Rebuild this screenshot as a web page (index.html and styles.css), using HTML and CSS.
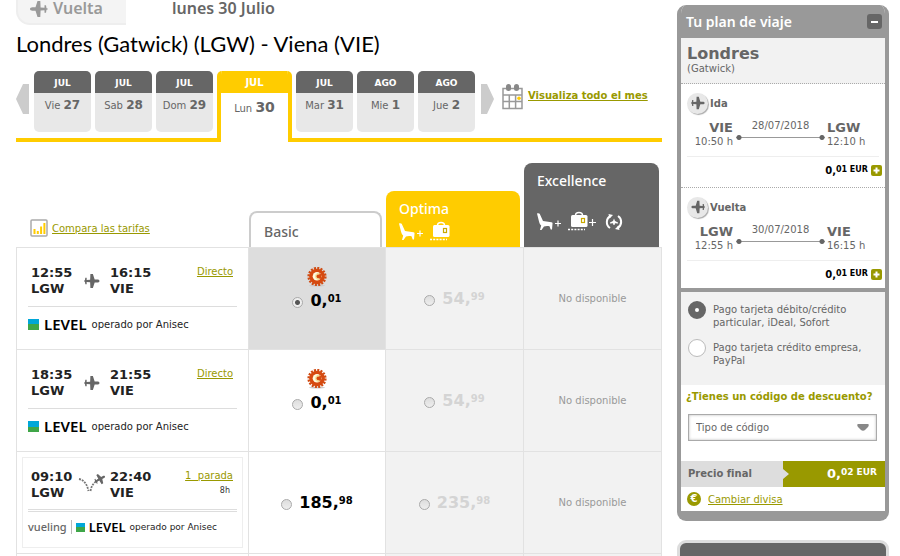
FILE: index.html
```html
<!DOCTYPE html>
<html lang="es">
<head>
<meta charset="utf-8">
<meta name="viewport" content="width=device-width, initial-scale=1">
<title>Londres - Viena</title>
<link rel="stylesheet" href="styles.css">
</head>
<body>
<svg class="defs" aria-hidden="true">
  <symbol id="plane" viewBox="0 0 18 18">
    <path d="M17.500 9c0 1-1 1.700-2.500 1.700h-3L10 17H7.200l-.3-6.500L3 10.200v2.500H1.500L1 9.700H0V8.300h1l.5-3H3v2.500l3.900-.3L7.200 1H10l2 6.300h3c1.500 0 2.500.7 2.500 1.700z"/>
  </symbol>
  <symbol id="seat" viewBox="0 0 26 18">
    <path d="M0 .5C.8 0 2 0 2.700.8L6 8l8.500 1.200c1 .2 1.200.8 1 1.600L15 16.500h-1.300l-1.200-3.300c-2-.5-4-.4-5.500.3L4.500 17H3l1.200-4.500C3 11.500 2.300 10 2 8.500z"/>
    <path d="M18 10.500h6M21 7.500v6" stroke="#fff" stroke-width="1.200" fill="none"/>
  </symbol>
  <symbol id="bag" viewBox="0 0 22 20">
    <path d="M8.500 4.500C8.500 .5 15.500 .5 15.500 4.500" fill="none" stroke="#fff" stroke-width="1.500"/>
    <rect x="4" y="4" width="16.500" height="12" rx="1.500"/>
    <rect x="14.500" y="7.500" width="3" height="4" fill="none" stroke="#c9a800" stroke-width="1.200"/>
    <path d="M1 18.500h17" stroke="#fff" stroke-width="1.500" stroke-dasharray="2 1.200"/>
  </symbol>
  <symbol id="promo" viewBox="0 0 20 20">
    <ellipse cx="10" cy="18.600" rx="8" ry="1" fill="#ccc"/>
    <circle cx="10" cy="9.500" r="8.300" fill="none" stroke="#cf4b12" stroke-width="2.600" stroke-dasharray="2 1.260"/>
    <circle cx="10" cy="9.500" r="7.800" fill="#d64a10"/>
    <circle cx="10" cy="9.300" r="4.300" fill="#fffbe0"/>
    <path d="M14 7.200a3 3 0 1 0 0 4.200z" fill="#d64a10"/>
    <path d="M12.500 7a2.600 2.600 0 1 0 0 4.600" fill="none" stroke="#f6e7a0" stroke-width="1.500"/>
  </symbol>
  <symbol id="plus" viewBox="0 0 11 11">
    <rect width="11" height="11" rx="2" fill="#999900"/>
    <path d="M5.500 2.500v6M2.500 5.500h6" stroke="#fff" stroke-width="2"/>
  </symbol>
</svg>

<div class="page">
<main class="main">
  <div class="leg">
    <div class="leg-tag"><svg class="leg-plane"><use href="#plane"/></svg>Vuelta</div>
    <div class="leg-date">lunes 30 Julio</div>
  </div>
  <h1>Londres (Gatwick) (LGW) - Viena (VIE)</h1>

  <div class="strip">
    <button class="arrow" aria-label="Anterior"><svg viewBox="0 0 13 30"><path d="M7 0h6v30H7L0 15z"/></svg></button>
    <button class="day"><span class="month">JUL</span><span class="date">Vie <b>27</b></span></button>
    <button class="day"><span class="month">JUL</span><span class="date">Sab <b>28</b></span></button>
    <button class="day"><span class="month">JUL</span><span class="date">Dom <b>29</b></span></button>
    <button class="day selected"><span class="month">JUL</span><span class="date">Lun <b>30</b></span></button>
    <button class="day"><span class="month">JUL</span><span class="date">Mar <b>31</b></span></button>
    <button class="day"><span class="month">AGO</span><span class="date">Mie <b>1</b></span></button>
    <button class="day"><span class="month">AGO</span><span class="date">Jue <b>2</b></span></button>
    <button class="arrow" aria-label="Siguiente"><svg viewBox="0 0 13 30"><path d="M6 0H0v30h6l7-15z"/></svg></button>
    <a class="month-link" href="#">
      <svg class="calendar" viewBox="0 0 21 26">
        <path d="M1 4.500h19v20H1zM1 11h19M1 17.500h19M7.300 11v13.500M13.600 11v13.500" fill="none" stroke="#999" stroke-width="1.500"/>
        <rect x="4" y="0" width="5" height="7" rx="2.500" fill="#888"/><rect x="12" y="0" width="5" height="7" rx="2.500" fill="#888"/>
        <circle cx="17" cy="14.300" r="1.800" fill="#fc0"/>
      </svg>
      <span>Visualiza todo el mes</span>
    </a>
  </div>

  <table class="fares">
    <thead>
      <tr>
        <th class="trip-col">
          <a class="compare" href="#">
            <svg viewBox="0 0 18 18"><rect x="1" y="1" width="16" height="16" rx="1" fill="#fff" stroke="#aaa" stroke-width="1.500"/><path d="M4.500 10v5M7.800 12v3M11.100 7.500V15M14.400 4v11" stroke="#fc0" stroke-width="2"/></svg>
            <span>Compara las tarifas</span>
          </a>
        </th>
        <th class="basic-col"><div class="tab basic">Basic</div></th>
        <th><div class="tab optima">Optima
          <div class="perks"><svg class="seat"><use href="#seat"/></svg><svg class="bag"><use href="#bag"/></svg></div></div></th>
        <th class="excellence-col"><div class="tab excellence">Excellence
          <div class="perks"><svg class="seat"><use href="#seat"/></svg><svg class="bag"><use href="#bag"/></svg><svg class="add" viewBox="0 0 7 7"><path d="M0 3.500h7M3.500 0v7" stroke="#fff" stroke-width="1.200"/></svg><svg class="flex" viewBox="0 0 18 18"><path d="M5.500 3A7 7 0 0 0 5 15M12.500 15A7 7 0 0 0 13 3" fill="none" stroke="#fff" stroke-width="2"/><path d="M3.500 1l4.500 1L4.500 5.500zM14.500 17l-4.500-1 3.500-3.500z"/><path d="M9 5.500l1 2.500 3 1.500v1l-3-.3-.5 1.800h-1L8 10.200l-3 .3v-1L8 8z"/></svg></div></div></th>
      </tr>
    </thead>
    <tbody>
      <tr>
        <td><div class="trip">
          <div class="times">
            <div class="stop">12:55<br>LGW</div><svg class="hop"><use href="#plane"/></svg><div class="stop">16:15<br>VIE</div>
            <div class="via"><a href="#">Directo</a></div>
          </div>
          <div class="carrier"><span class="flag"></span><span class="level">LEVEL</span><span>operado por Anisec</span></div>
        </div></td>
        <td class="chosen"><svg class="promo"><use href="#promo"/></svg><label class="price"><input type="radio" name="fare" checked><span>0,<sup>01</sup></span></label></td>
        <td class="off"><label class="price"><input type="radio" name="fare"><span>54,<sup>99</sup></span></label></td>
        <td class="off">No disponible</td>
      </tr>
      <tr>
        <td><div class="trip">
          <div class="times">
            <div class="stop">18:35<br>LGW</div><svg class="hop"><use href="#plane"/></svg><div class="stop">21:55<br>VIE</div>
            <div class="via"><a href="#">Directo</a></div>
          </div>
          <div class="carrier"><span class="flag"></span><span class="level">LEVEL</span><span>operado por Anisec</span></div>
        </div></td>
        <td><svg class="promo"><use href="#promo"/></svg><label class="price"><input type="radio" name="fare"><span>0,<sup>01</sup></span></label></td>
        <td class="off"><label class="price"><input type="radio" name="fare"><span>54,<sup>99</sup></span></label></td>
        <td class="off">No disponible</td>
      </tr>
      <tr>
        <td><div class="trip framed">
          <div class="times">
            <div class="stop">09:10<br>LGW</div>
            <svg class="hop bounce" viewBox="0 0 28 24"><path d="M1 6c5 1 8 5 9.500 12M12.500 18c1-6 4-9 8-11" fill="none" stroke="#777" stroke-width="1.800" stroke-dasharray="2 1"/><use href="#plane" x="16" y="0" width="12" height="12" transform="rotate(-30 22 6)"/></svg>
            <div class="stop">22:40<br>VIE</div>
            <div class="via"><a href="#">1&nbsp; parada</a><small>8h</small></div>
          </div>
          <div class="carrier"><span class="vueling">vueling</span><span class="flag"></span><span class="level">LEVEL</span><span>operado por Anisec</span></div>
        </div></td>
        <td><label class="price"><input type="radio" name="fare"><span>185,<sup>98</sup></span></label></td>
        <td class="off"><label class="price"><input type="radio" name="fare"><span>235,<sup>98</sup></span></label></td>
        <td class="off">No disponible</td>
      </tr>
      <tr class="rest"><td></td><td></td><td class="off"></td><td class="off"></td></tr>
    </tbody>
  </table>
</main>

<aside class="side">
  <section class="plan">
    <header><h2>Tu plan de viaje</h2><button class="fold" aria-label="Contraer"></button></header>
    <div class="city"><strong>Londres</strong><span>(Gatwick)</span></div>
    <div class="flight">
      <h3><span class="disc"><svg><use href="#plane"/></svg></span>Ida</h3>
      <div class="route">
        <div class="end from"><b>VIE</b>10:50 h</div>
        <div class="line">28/07/2018<i></i></div>
        <div class="end"><b>LGW</b>12:10 h</div>
      </div>
      <div class="cost"><span>0,<sup>01 EUR</sup></span><button aria-label="Ver detalle"><svg><use href="#plus"/></svg></button></div>
    </div>
    <div class="flight">
      <h3><span class="disc back"><svg><use href="#plane"/></svg></span>Vuelta</h3>
      <div class="route">
        <div class="end from"><b>LGW</b>12:55 h</div>
        <div class="line">30/07/2018<i></i></div>
        <div class="end"><b>VIE</b>16:15 h</div>
      </div>
      <div class="cost"><span>0,<sup>01 EUR</sup></span><button aria-label="Ver detalle"><svg><use href="#plus"/></svg></button></div>
    </div>
    <div class="payment">
      <label><input type="radio" name="pay" checked><span>Pago tarjeta débito/crédito particular, iDeal, Sofort</span></label>
      <label><input type="radio" name="pay"><span>Pago tarjeta crédito empresa, PayPal</span></label>
    </div>
    <div class="discount">
      <label for="code">¿Tienes un código de descuento?</label>
      <div class="select"><select id="code"><option>Tipo de código</option></select><svg viewBox="0 0 12 7"><path d="M1 0h10c1 0 1 2 0 3L8 6c-1 1-3 1-4 0L1 3C0 2 0 0 1 0z"/></svg></div>
    </div>
    <div class="total"><span class="total-label">Precio final</span><span class="total-price">0,<sup>02 EUR</sup></span></div>
    <div class="currency"><span class="euro">€</span><a href="#">Cambiar divisa</a></div>
  </section>
  <section class="next"></section>
</aside>
</div>
</body>
</html>
```
FILE: styles.css
```css
* { box-sizing: border-box; }
html, body { height: 100%; }
body {
  margin: 0;
  overflow: hidden;
  background: #fff;
  color: #666;
  font: 10px/13px "DejaVu Sans", Verdana, sans-serif;
}
button { margin: 0; padding: 0; border: 0; background: none; font: inherit; color: inherit; }
a { color: #999900; }
h1, h2, h3 { margin: 0; }
.defs { position: absolute; width: 0; height: 0; }
.page { display: flex; gap: 15px; height: 100%; overflow: hidden; padding: 0 11px 0 16px; }
.main { flex: 1; min-width: 0; }
.side { flex: 0 0 212px; padding-top: 5px; }

/* Leg heading */
.leg { display: flex; gap: 46px; height: 26px; font: 600 16px/16px "Noto Sans", sans-serif; }
.leg-tag {
  display: flex;
  gap: 5px;
  width: 110px;
  height: 25px;
  padding-left: 11px;
  border-bottom: 2px solid #eee;
  border-left: 2px solid #eee;
  border-bottom-left-radius: 14px;
  background: #f4f4f4;
  color: #999;
}
.leg-plane { width: 19px; height: 18px; fill: #999; transform: rotate(180deg); }
h1 { height: 45px; color: #000; font: 400 22px/36px Lato, sans-serif; }

/* Day strip */
.strip { display: flex; gap: 4px; height: 71px; border-bottom: 4px solid #fc0; }
.arrow { width: 13px; height: 30px; margin: 13px 1px 0 0; }
.arrow svg { display: block; width: 13px; height: 30px; fill: #ccc; }
.strip .day + .arrow { margin: 13px 0 0 2px; }
.day {
  display: flex;
  flex-direction: column;
  width: 57px;
  height: 61px;
  overflow: hidden;
  border-radius: 5px;
  background: #e8e8e8;
}
.month { align-self: stretch; height: 22px; background: #666; color: #fff; font-size: 9px; font-weight: bold; line-height: 24px; }
.date { align-self: stretch; line-height: 24px; }
.date b { font-size: 12px; }
.day.selected {
  width: 75px;
  height: 71px;
  border: solid #fc0;
  border-width: 0 4px;
  border-radius: 5px 5px 0 0;
  background: #fff;
}
.selected .month { background: #fc0; font-size: 10px; }
.selected .date { line-height: 28px; }
.selected .date b { font-size: 14px; }
.month-link { display: flex; gap: 5px; align-self: flex-start; margin: 13px 0 0 4px; font-weight: bold; line-height: 24px; }
.calendar { width: 21px; height: 26px; }

/* Fare table */
.fares { width: 100%; margin-top: 21px; border-collapse: separate; border-spacing: 0; table-layout: fixed; }
.fares th { width: 138px; height: 84px; padding: 0; vertical-align: bottom; text-align: left; font-weight: normal; }
.fares th.trip-col { width: auto; }
.fares th.basic-col { width: 137px; }
.fares th.excellence-col { width: 139px; }
.compare { display: flex; gap: 4px; align-items: center; margin: 0 0 10px 14px; }
.compare svg { width: 18px; height: 18px; }
.tab { margin: 0 3px 0 1px; border-radius: 8px 8px 0 0; color: #fff; font: 500 14px/20px "Noto Sans", sans-serif; }
.basic { height: 36px; padding: 9px 13px; border: 2px solid #ccc; border-bottom: 0; color: #666; }
.optima { height: 56px; padding: 8px 13px 0; background: #fc0; }
.excellence { height: 84px; padding: 8px 13px 0; background: #666; }
.perks { display: flex; align-items: flex-start; gap: 4px; margin-top: 2px; fill: #fff; }
.excellence .perks { margin-top: 20px; }
.seat { width: 26px; height: 20px; padding-top: 2px; }
.bag { width: 22px; height: 20px; }
.add { width: 7px; height: 7px; margin: 8px 5px 0 -4px; }
.flex { width: 18px; height: 18px; margin-top: 2px; }
.fares td { height: 102px; padding: 0; border-top: 1px solid #e2e2e2; border-left: 1px solid #e2e2e2; text-align: center; color: #999; }
.fares td:last-child { border-right: 1px solid #e2e2e2; }
.fares .off { background: #f2f2f2; }
.fares .chosen { background: #ddd; }
.fares .rest td { height: 10px; }

.trip { display: flex; flex-direction: column; height: 91px; margin: 5px; padding: 12px 6px 0; color: #333; text-align: left; }
.framed { border: 1px solid #eee; padding: 11px 5px 0; }
.times { display: flex; height: 42px; padding: 0 4px 0 3px; border-bottom: 1px solid #ddd; }
.framed .times { height: 43px; border-bottom: 3px double #ddd; }
.stop { width: 46px; color: #222; font-size: 13px; font-weight: bold; line-height: 16px; }
.hop { width: 16px; height: 16px; margin: 8px 10px 0 7px; fill: #666; }
.bounce { width: 28px; height: 24px; margin: 4px 4px 0 1px; }
.via { flex: 1; text-align: right; }
.via small { display: block; padding-right: 3px; font-size: 8px; line-height: 18px; }
.carrier { display: flex; align-items: center; gap: 5px; height: 34px; color: #222; white-space: nowrap; }
.flag { width: 11px; height: 11px; background: linear-gradient(#00a7d8 50%, #3fa648 50%); }
.level { color: #000; font: 600 15px/18px "Noto Sans", sans-serif; }
.framed .carrier { gap: 4px; height: 30px; font-size: 9px; }
.framed .flag { width: 9px; height: 9px; }
.framed .level { font-size: 13px; }
.vueling { padding-right: 4px; border-right: 1px solid #bbb; color: #666; font: 500 11px/14px "Noto Sans", sans-serif; }

.promo { display: block; width: 20px; height: 20px; margin: -18px auto 2px; }
.price { display: flex; align-items: center; justify-content: center; gap: 7px; color: #000; font-size: 16px; font-weight: bold; line-height: 24px; }
.off .price { color: #d4d4d4; }
.price sup { font-size: 10px; line-height: 10px; vertical-align: 4px; }
.price input {
  appearance: none;
  width: 11px;
  height: 11px;
  margin: 3px 0 0;
  border: 1px solid #aaa;
  border-radius: 50%;
  background: linear-gradient(#ddd, #eee);
}
.price input:checked { background: radial-gradient(#555 2px, #eee 3px); }

/* Travel plan */
.plan { border: solid #999; border-width: 0 4px 10px; border-radius: 9px; overflow: hidden; background: #fff; }
.plan header { display: flex; align-items: center; justify-content: space-between; height: 33px; padding: 0 3px 0 5px; background: #999; }
h2 { color: #fff; font: 600 14px/20px "Noto Sans", sans-serif; }
.fold { display: grid; place-items: center; width: 15px; height: 15px; border-radius: 3px; background: #666; }
.fold::before { content: ""; width: 7px; height: 2px; background: #fff; }
.city { height: 46px; padding: 6px; border-bottom: 1px dotted #aaa; background: #f2f2f2; }
.city strong { display: block; font-size: 16px; line-height: 19px; }
.city span { display: block; line-height: 11px; }
.flight { height: 104px; padding: 8px 3px 0 6px; border-bottom: 1px dotted #aaa; }
.flight + .flight { border-bottom: 4px solid #999; }
h3 { display: flex; align-items: center; gap: 2px; height: 22px; font-size: 10px; }
.disc { display: grid; place-items: center; width: 21px; height: 21px; border-radius: 50%; background: #e8e8e8; box-shadow: 1px 1px 1px #aaa; }
.disc svg { width: 14px; height: 14px; fill: #666; }
.back svg { transform: rotate(180deg); }
.route { display: flex; justify-content: space-between; height: 43px; margin-right: 3px; padding: 7px 8px 0 2px; border-bottom: 1px solid #eee; }
.end { width: 44px; line-height: 14px; white-space: nowrap; }
.end b { display: block; font-size: 13px; }
.from { text-align: right; }
.line { flex: 1; margin: 0 2px 0 3px; text-align: center; line-height: 10px; }
.line i { display: block; height: 5px; margin-top: 4px; background: radial-gradient(circle at 3px, #666 2px, transparent 3px), radial-gradient(circle at calc(100% - 3px), #666 2px, transparent 3px), linear-gradient(transparent 2px, #999 2px, #999 3px, transparent 3px); }
.cost { display: flex; align-items: center; justify-content: flex-end; gap: 3px; height: 26px; color: #000; font-weight: bold; }
.cost sup { font-size: 8px; line-height: 8px; vertical-align: 2px; }
.cost svg { display: block; width: 11px; height: 11px; }
.payment { height: 93px; padding: 9px 8px 0 7px; background: #f2f2f2; }
.payment label { display: flex; gap: 7px; height: 38px; }
.payment span { padding-top: 2px; }
.payment input { appearance: none; flex: 0 0 18px; height: 18px; margin: 0; border: 1px solid #bbb; border-radius: 50%; background: #fff; }
.payment input:checked { border: 7px solid #666; }
.discount { padding: 5px 8px 0 5px; }
.discount label { color: #999900; font-weight: bold; white-space: nowrap; }
.select { position: relative; margin-top: 11px; margin-left: 2px; }
.select select { display: block; appearance: none; width: 100%; height: 27px; padding: 0 7px; border: 1px solid #aaa; border-radius: 0; background: #fff; box-shadow: inset 0 0 3px #bbb; color: #666; font: inherit; }
.select svg { position: absolute; top: 10px; right: 8px; width: 12px; height: 7px; fill: #888; pointer-events: none; }
.total { display: flex; height: 26px; margin-top: 20px; background: #ddd; font-weight: bold; line-height: 26px; }
.total-label { width: 102px; padding-left: 7px; }
.total-price { flex: 1; padding-right: 8px; background: #999900; clip-path: polygon(0 0, 100% 0, 100% 100%, 0 100%, 0 18px, 6px 13px, 0 8px); color: #fff; font-size: 13px; text-align: right; }
.total sup { font-size: 9px; line-height: 9px; vertical-align: 3px; }
.currency { display: flex; align-items: center; gap: 7px; height: 24px; padding-left: 6px; }
.euro { width: 14px; height: 14px; border-radius: 50%; background: #999900; color: #fff; font-weight: bold; line-height: 14px; text-align: center; }
.next { height: 60px; margin-top: 19px; border: 3px solid #ddd; border-radius: 9px; background: #666; }
```
